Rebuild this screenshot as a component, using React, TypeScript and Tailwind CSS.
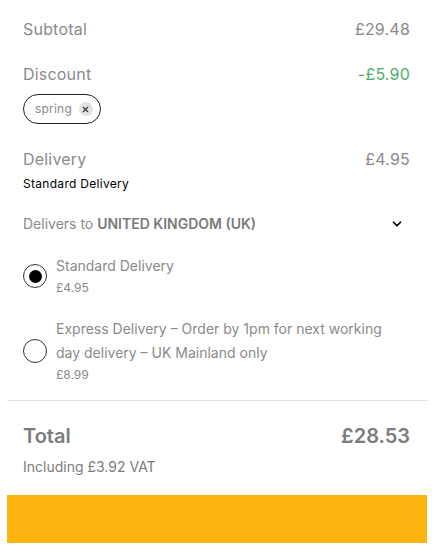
import { ChevronDown, X } from 'lucide-react';

const font = { fontFamily: 'Inter, "Open Sans", sans-serif' };

function Row({ label, value, valueClass = 'text-[#8a8a8a]' }: { label: string; value: string; valueClass?: string }) {
  return (
    <div className="flex items-center justify-between text-[16px] leading-[24px] tracking-[0.2px]">
      <span className="text-[#8a8a8a]">{label}</span>
      <span className={valueClass}>{value}</span>
    </div>
  );
}

function Radio({ checked }: { checked?: boolean }) {
  return (
    <span className="flex size-[24px] shrink-0 items-center justify-center rounded-full border border-[#333] bg-white">
      {checked && <span className="size-[13px] rounded-full bg-black" />}
    </span>
  );
}

export default function App() {
  return (
    <div className="w-[441px] bg-white pl-[7px] pr-[14px]" style={font}>
      <div className="pl-4 pr-[17px] pt-[17px]">
        <Row label="Subtotal" value="£29.48" />
        <div className="mt-[21px]">
          <Row label="Discount" value="-£5.90" valueClass="text-[#4caf6a]" />
        </div>
        <div className="mt-[8px] inline-flex h-[30px] items-center gap-[7px] rounded-full border border-[#222] pl-[11px] pr-[7px]">
          <span className="text-[12px] tracking-[0.2px] text-[#8a8a8a]">spring</span>
          <span className="flex size-[14px] items-center justify-center rounded-full bg-[#e2e2e2]">
            <X size={9} strokeWidth={3} className="text-[#333]" />
          </span>
        </div>
        <div className="mt-[23px]">
          <Row label="Delivery" value="£4.95" />
        </div>
        <div className="mt-[4px] text-[12px] tracking-[0.3px] text-black">Standard Delivery</div>

        <div className="mt-[20px] flex items-center justify-between text-[14px] text-[#8a8a8a]">
          <span>
            Delivers to <b className="font-semibold text-[#7a7a7a]">UNITED KINGDOM (UK)</b>
          </span>
          <ChevronDown size={14} strokeWidth={3} className="mr-[6px] text-black" />
        </div>

        <div className="mt-[20px] flex flex-col gap-[19px]">
          <label className="flex items-center gap-[9px]">
            <Radio checked />
            <span className="flex flex-col">
              <span className="text-[14px] leading-[24px] text-[#8a8a8a]">Standard Delivery</span>
              <span className="text-[12px] leading-[20px] text-[#8a8a8a]">£4.95</span>
            </span>
          </label>
          <label className="flex items-center gap-[9px]">
            <Radio />
            <span className="flex max-w-[340px] flex-col">
              <span className="text-[14px] leading-[24px] text-[#8a8a8a]">
                Express Delivery – Order by 1pm for next working day delivery – UK Mainland only
              </span>
              <span className="text-[12px] leading-[20px] text-[#8a8a8a]">£8.99</span>
            </span>
          </label>
        </div>
      </div>

      <div className="mt-[15px] border-t border-[#e2e2e2]" />

      <div className="pl-4 pr-[17px] pt-[20px]">
        <div className="flex items-center justify-between text-[20px] font-semibold text-[#7c7c7c]">
          <span>Total</span>
          <span>£28.53</span>
        </div>
        <div className="mt-[5px] text-[14px] text-[#7c7c7c]">Including £3.92 VAT</div>
      </div>

      <div className="mt-[18px] h-[48px] bg-[#fdb40f]" />
      <div className="h-[13px]" />
    </div>
  );
}
